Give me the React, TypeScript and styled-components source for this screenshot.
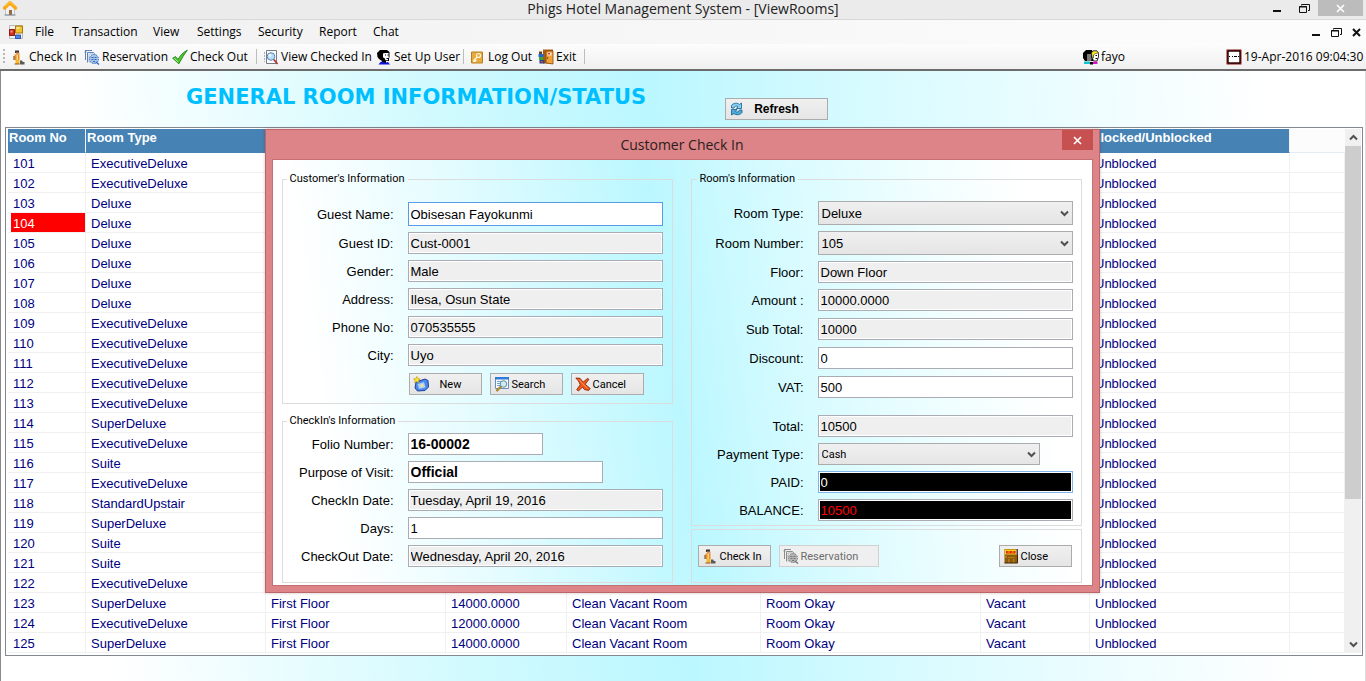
import React from 'react';
import styled, { createGlobalStyle, css } from 'styled-components';

const uiFont = `"Open Sans", "Noto Sans", sans-serif`;
const gridFont = `"Liberation Sans", Arial, sans-serif`;
const smallFont = `Roboto, "Liberation Sans", sans-serif`;

const GlobalStyle = createGlobalStyle`
  *, *::before, *::after { box-sizing: border-box; }
  body { margin: 0; background: #fff; color: #000; font-family: ${gridFont}; font-size: 13px; }
  button, input, select { font: inherit; color: inherit; margin: 0; }
  svg { display: block; flex: none; }
`;

/* ---------- icons ---------- */

type IconProps = { size?: number };

const HomeIcon = ({ size = 16 }: IconProps) => (
  <svg width={size} height={size} viewBox="0 0 16 16">
    <path d="M3.500 8 8 4l4.500 4v7h-9z" fill="#eef1f4" stroke="#b3bac2" strokeWidth=".8" />
    <path d="M7 10h3v5H7z" fill="#9a6a3c" />
    <path d="M2.500 8 8 2.800l5.500 5.200" fill="none" stroke="#fba615" strokeWidth="3.400" strokeLinejoin="round" strokeLinecap="round" />
    <path d="M3 6.500 8 2l4.500 4" fill="none" stroke="#ffcf45" strokeWidth="1" />
    <path d="M2.500 15h11" stroke="#7c8794" strokeWidth="1" />
  </svg>
);

const FormIcon = ({ size = 16 }: IconProps) => (
  <svg width={size} height={size} viewBox="0 0 16 16">
    <path d="M1.500 1.500h13v13h-13z" fill="#f4f4f4" stroke="#b9b9b9" />
    <path d="M1.500 5.500h5v6h-5z" fill="#d6311d" stroke="#8f1a10" />
    <path d="M2.500 6.500h2v2h-2z" fill="#f29a86" />
    <path d="M7.500 2h7v7h-7z" fill="#f5c32c" stroke="#a97a0c" />
    <path d="M8.500 3h3v2h-3z" fill="#fdeb9c" />
    <path d="M7.500 11h5v3.500h-5z" fill="#4b86ea" stroke="#2a55b0" />
  </svg>
);

const PorterIcon = ({ size = 16 }: IconProps) => (
  <svg width={size} height={size} viewBox="0 0 16 16">
    <path d="M4 1.500h4V4H4z" fill="#41322a" />
    <path d="M5 3.500h3.500v2H5z" fill="#d79b62" />
    <path d="M3.500 5.500h5V11h-5z" fill="#ef8a1b" />
    <path d="M5.500 6H7v5H5.500z" fill="#ffd98a" />
    <path d="M4.500 11h4v4h-4z" fill="#f5b92e" />
    <path d="M3.500 14.500h5v1h-5z" fill="#8d5312" />
    <path d="M9 11.500h2l1 1.500h1.500v2.500H9z" fill="#5b5b5b" />
    <path d="M3 7v4" stroke="#6b3b0d" />
  </svg>
);

const ReserveIcon = ({ size = 16, muted }: IconProps & { muted?: boolean }) => {
  const a = muted ? '#8d8d8d' : '#5f7fb5';
  const b = muted ? '#b5b5b5' : '#a9c3e6';
  const c = muted ? '#777' : '#2f6cc0';
  return (
    <svg width={size} height={size} viewBox="0 0 16 16">
      <path d="M1 1.500h7M1.500 1.500V11M.5 3h2M3.500 13.500v-10h6l2 2" fill="none" stroke={a} />
      <path d="M5 5h6l2 2v6H5z" fill="#f3f7fd" stroke={b} />
      <circle cx="10" cy="10" r="4.500" fill={b} stroke={c} strokeDasharray="1.500 1" />
      <path d="M7.500 8.500h2M10.500 8.500h2M7.500 10.500h2M10.500 10.500h2M9 12.500h2" stroke={c} />
      <path d="M12 13l3 2.500" stroke={c} strokeWidth="1.500" />
    </svg>
  );
};

const TickIcon = ({ size = 16 }: IconProps) => (
  <svg width={size} height={size} viewBox="0 0 16 16">
    <path d="M.7 9.200 3.600 7.600l2.300 3C8.300 6.300 11 3.500 15.300 1.200c-3 3.800-5.400 8-8.500 13.600z" fill="#4fcb33" stroke="#1f7d13" strokeWidth=".9" strokeLinejoin="round" />
    <path d="M2.300 9.300 6 13" stroke="#a6f08d" strokeWidth=".9" />
  </svg>
);

const ViewIcon = ({ size = 16 }: IconProps) => (
  <svg width={size} height={size} viewBox="0 0 16 16">
    <path d="M3.500 1.500h10v13h-10z" fill="#fdfdfd" stroke="#767c86" />
    <path d="M1.500 3v10" stroke="#a9aeb5" strokeDasharray="2 1" />
    <circle cx="8" cy="7.500" r="3.800" fill="#b7dcf8" stroke="#5e89b5" />
    <circle cx="7" cy="6.500" r="1.400" fill="#eef8ff" />
    <path d="M10.800 10.500 14.500 15" stroke="#b5352a" strokeWidth="1.800" />
  </svg>
);

const UserIcon = ({ size = 16 }: IconProps) => (
  <svg width={size} height={size} viewBox="0 0 16 16">
    <path d="M1 4 4 1h7l2.500 2v5l-.5 1.500v2.500h-3v2H6v-2L3 10 1.500 8z" fill="#000" />
    <path d="M7 4.500l2-.5h3.500v3.500l.8 1.200H12v2.500H9.500L8.500 9 7 8.500z" fill="#fff" />
    <path d="M9 6h1M11.500 6h1M10.500 9.500H12" stroke="#000" />
    <path d="M2.500 15.500 5 12.500l4 1.200 3-.7 2 2.500z" fill="#1010d8" />
  </svg>
);

const KeyIcon = ({ size = 16 }: IconProps) => (
  <svg width={size} height={size} viewBox="0 0 16 16">
    <path d="M1.500 3h11v11h-11z" fill="#eaa93c" stroke="#b9801f" />
    <circle cx="8.500" cy="6.500" r="2" fill="none" stroke="#fffbe9" strokeWidth="1.200" />
    <path d="M7.200 8 3.800 11.300v1.200h1.400v-1.200h1.400" fill="none" stroke="#fffbe9" strokeWidth="1.100" />
  </svg>
);

const ExitIcon = ({ size = 16 }: IconProps) => (
  <svg width={size} height={size} viewBox="0 0 16 16">
    <path d="M5 .5h10v14H5z" fill="#a85f14" />
    <path d="M8 2h7v13l-7-1z" fill="#f1a236" stroke="#8b4a0c" strokeWidth=".8" />
    <path d="M9.500 3.500h4v3h-4z" fill="#fbe9c6" />
    <path d="M10 4h2v1.500h-2z" fill="#e3324a" />
    <circle cx="9.500" cy="9" r=".8" fill="#6b3609" />
    <path d="M1 2.500h3v2.500H1z" fill="#6a4520" />
    <path d="M.5 5h5v3h-5z" fill="#2368c9" />
    <path d="M1 8h4v3H1z" fill="#3aa53a" />
    <path d="M1.500 11h5v3.500h-5z" fill="#27418f" />
    <path d="M3 12h2v1.500H3z" fill="#e8412a" />
  </svg>
);

const FacesIcon = ({ size = 16 }: IconProps) => (
  <svg width={size} height={size} viewBox="0 0 16 16">
    <path d="M0 4 3 1h6l1 3v8H2L0 9z" fill="#000" />
    <path d="M4 5h4v3l1 1-1 3H4z" fill="#7a7a7a" />
    <path d="M8.500 4 10 2h4l1.500 2.500V8L14 12h-3L9 9z" fill="#fff" stroke="#000" strokeWidth=".8" />
    <path d="M8.500 4 10 2h4l1.500 2-3 .5-2 1.500v3L9 8z" fill="#ffe92e" stroke="#000" strokeWidth=".5" />
    <path d="M12.500 6.500H14M12.500 9.500h2" stroke="#000" />
    <path d="M1 15v-2.500h6V15z" fill="#12c3cf" />
    <path d="M10 15v-2.500h4.500V15z" fill="#d516c8" />
    <path d="M7 13v2.500h3V13z" fill="#000" />
  </svg>
);

const ClockIcon = ({ size = 16 }: IconProps) => (
  <svg width={size} height={size} viewBox="0 0 16 16">
    <path d="M1.500 1.500h13v13h-13z" fill="#fff" stroke="#8e1414" strokeWidth="2" />
    <path d="M2 2h12v12H2z" fill="none" stroke="#000" />
    <path d="M3 7.500h1M6 7.500h1M8 7.500h3M12 7.500h1" stroke="#000" />
  </svg>
);

const RefreshIcon = ({ size = 16 }: IconProps) => (
  <svg width={size} height={size} viewBox="0 0 16 16">
    <path d="M2.500 7V4.500C4 2 8.500 1.500 10.500 3.500L12.500 2v5.500H7.500L9 5.500C7.500 4.500 5.500 5 5 7z" fill="#8bd0f0" stroke="#1e6c9c" strokeWidth=".9" strokeLinejoin="round" />
    <path d="M13 9v2.500C11.500 14 7 14.500 5 12.500L2.500 14V8.500h5.500L6.500 10.500C8 11.500 10 11 10.500 9z" fill="#4fa9da" stroke="#1e6c9c" strokeWidth=".9" strokeLinejoin="round" />
  </svg>
);

const NewIcon = ({ size = 16 }: IconProps) => (
  <svg width={size} height={size} viewBox="0 0 16 16">
    <path d="M3 6 12 3l3 1.500.5 6.500-3.500 3.500-7.500.5L2 12z" fill="#4d86ea" stroke="#1d3f9e" />
    <path d="M4.500 8 11 6l1.500 5.500-6.500 1.500z" fill="#a9d0fb" />
    <circle cx="9" cy="9.500" r="1.500" fill="#ffe27a" />
    <path d="m3.800.5 1 2.200 2.400.2-1.800 1.600.6 2.400-2.200-1.300-2.100 1.300.5-2.400L.5 2.900l2.300-.2z" fill="#ffe92a" stroke="#b98b00" strokeWidth=".6" />
  </svg>
);

const SearchIcon = ({ size = 16 }: IconProps) => (
  <svg width={size} height={size} viewBox="0 0 16 16">
    <path d="M1.500 1.500h13v11h-13z" fill="#f7fbff" stroke="#6c8fb8" />
    <path d="M1 1h14v2.500H1z" fill="#2f7bd8" />
    <path d="M3 5.500h4M3 7.500h3M3 9.500h3" stroke="#6fa6cf" />
    <circle cx="9.500" cy="8" r="3.300" fill="#c9ecf4" stroke="#6a8894" />
    <path d="M7 10.500 2.500 15" stroke="#8a6a1c" strokeWidth="2.200" />
    <path d="M6.500 11 3 14.500" stroke="#e8b83a" strokeWidth="1" />
  </svg>
);

const CancelIcon = ({ size = 16 }: IconProps) => (
  <svg width={size} height={size} viewBox="0 0 16 16">
    <path d="M.8 2 5 2.300 8.200 6 12.500 2.500 14 3.300 10.200 8.300l5 4.200-1.600 2-4.300-1L7.500 11 3.500 15l-1.800-1.300 3.500-5L3.500 5z" fill="#f4571c" stroke="#7a1f08" strokeWidth=".8" strokeLinejoin="round" />
    <path d="M4 3.500 8 8l4.500 4.500" stroke="#ff9a4a" fill="none" />
  </svg>
);

const CloseIcon = ({ size = 16 }: IconProps) => (
  <svg width={size} height={size} viewBox="0 0 16 16">
    <path d="M1.500 1h13v14h-13z" fill="#8d5a0e" />
    <path d="M2 1.500h11.500v5H2z" fill="#f9d21c" />
    <path d="M3 3h9.500v2.500H3z" fill="#dd1f12" />
    <path d="M4.500 4H7M8.500 4H11" stroke="#ffb01c" />
    <path d="M2 8h2v2H2zM5 9h7v1H5zM5 11h1.500v4H5zM10 11h1.500v4H10z" fill="#b97c14" />
    <path d="M14.500 1v6" stroke="#2a3f9e" />
    <path d="M14.500 7v8h-13" fill="none" stroke="#3c2604" />
  </svg>
);

const Chevron = ({ up }: { up?: boolean }) => (
  <svg width="9" height="7" viewBox="0 0 9 7">
    <path d={up ? 'M1 5.500 4.500 2 8 5.500' : 'M1 1.500 4.500 5 8 1.500'} fill="none" stroke="#505050" strokeWidth="2" />
  </svg>
);

const CrossIcon = ({ size = 9, weight = 2 }: { size?: number; weight?: number }) => (
  <svg width={size} height={size} viewBox="0 0 9 9">
    <path d="m1 1 7 7M8 1 1 8" stroke="currentColor" strokeWidth={weight} />
  </svg>
);

const MinimizeIcon = () => (
  <svg width="10" height="10" viewBox="0 0 10 10">
    <path d="M1 8h8" stroke="currentColor" strokeWidth="2" />
  </svg>
);

const RestoreIcon = () => (
  <svg width="11" height="11" viewBox="0 0 11 11">
    <path d="M.5 3.500h7v6h-7zM0 4h8" fill="none" stroke="currentColor" />
    <path d="M2.500 2.500v-1h8v6H9" fill="none" stroke="currentColor" />
  </svg>
);

/* ---------- window chrome ---------- */

const Window = styled.div`
  position: relative;
  min-height: 100vh;
  display: flex;
  flex-direction: column;
`;

const TitleBar = styled.header`
  display: grid;
  grid-template-columns: 1fr auto 1fr;
  height: 20px;
  background: #ebebeb;
  border-bottom: 1px solid #d8d8d8;
  font-family: ${uiFont};
`;

const AppMark = styled.div`
  padding-left: 2px;
`;

const AppTitle = styled.h1`
  margin: 0;
  font-size: 14px;
  line-height: 18px;
  font-weight: 400;
  color: #222;
`;

const WindowButtons = styled.div`
  display: flex;
  justify-content: flex-end;
  padding-right: 3px;
`;

const ChromeButton = styled.button<{ $w: number; $closing?: boolean }>`
  display: flex;
  align-items: center;
  justify-content: center;
  width: ${(p) => p.$w}px;
  height: 16px;
  padding: 0;
  border: 0;
  background: ${(p) => (p.$closing ? '#bcbcbc' : 'transparent')};
  color: ${(p) => (p.$closing ? '#fff' : '#111')};
`;

const MenuBar = styled.nav`
  display: flex;
  align-items: center;
  height: 24px;
  padding-left: 8px;
  background: linear-gradient(90deg, #f0f0f0, #fcfcfc 90%);
  font-family: ${uiFont};
  font-size: 12px;
  line-height: 16px;
`;

const MenuButton = styled.button<{ $w: number }>`
  width: ${(p) => p.$w}px;
  padding: 0;
  border: 0;
  background: none;
  text-align: left;
  white-space: nowrap;
`;

const MenuIcon = styled.span`
  width: 27px;
`;

const Spring = styled.span`
  flex: 1;
`;

const Toolbar = styled.div`
  display: flex;
  align-items: center;
  height: 27px;
  padding: 0 4px 0 3px;
  background: linear-gradient(#fdfdfd, #f0f0f0);
  border-bottom: 2px solid #6c6c6c;
  font-family: ${uiFont};
  font-size: 12px;
  line-height: 16px;
`;

const Grip = styled.span`
  width: 2px;
  height: 16px;
  margin-right: 6px;
  background: repeating-linear-gradient(#b9b9b9 0 2px, transparent 2px 4px);
`;

const ToolButton = styled.button<{ $w: number }>`
  display: flex;
  align-items: center;
  gap: 2px;
  width: ${(p) => p.$w}px;
  padding: 0;
  border: 0;
  background: none;
  white-space: nowrap;
`;

const ToolDivider = styled.span`
  width: 1px;
  height: 15px;
  margin-right: 6px;
  background: #bdbdbd;
`;

const ToolStatus = styled.span<{ $w: number }>`
  display: flex;
  align-items: center;
  gap: 2px;
  width: ${(p) => p.$w}px;
  white-space: nowrap;
`;

/* ---------- rooms view ---------- */

const RoomsView = styled.main`
  flex: 1;
  padding: 0 2px 25px 4px;
  border-left: 1px solid #8a8a8a;
  border-right: 1px solid #dcdcdc;
  background: linear-gradient(86deg, #fff 8%, #d0fafe 34%, #bbf7ff 49%, #d8fbff 65%, #eefdff 80%, #fff 93%);
`;

const ViewHeader = styled.div`
  display: flex;
  height: 56px;
  padding-left: 181px;
`;

const ViewTitle = styled.h2`
  width: 539px;
  margin: 0;
  padding-top: 12px;
  font-family: "DejaVu Sans", Verdana, sans-serif;
  font-size: 21px;
  line-height: 28px;
  font-weight: 700;
  color: #00bfff;
  white-space: nowrap;
`;

const PushButton = styled.button<{ $w: number }>`
  display: flex;
  align-items: center;
  width: ${(p) => p.$w}px;
  height: 22px;
  padding: 0 4px 0 3px;
  border: 1px solid #acacac;
  background: linear-gradient(#f0f0f0, #e5e5e5);
  font-family: ${smallFont};
  font-size: 11px;
  white-space: nowrap;
  &:disabled {
    color: #6d6d6d;
    border-color: #d0d0d0;
    background: #efefef;
  }
`;

const ButtonText = styled.span<{ $centered?: boolean }>`
  padding-left: 2px;
  ${(p) =>
    p.$centered &&
    css`
      flex: 1;
      text-align: center;
      padding-left: 0;
      padding-right: 4px;
    `}
`;

const RefreshButton = styled(PushButton)`
  margin-top: 27px;
  padding-right: 15px;
  font-family: ${gridFont};
  font-size: 12px;
  font-weight: 700;
`;

const GridPanel = styled.div`
  display: flex;
  padding: 1px 1px 2px 2px;
  border: 1px solid #828790;
  background: #fff;
`;

const RoomTable = styled.table`
  flex: 1;
  min-width: 0;
  table-layout: fixed;
  border-spacing: 0;
  color: #000080;
`;

const HeadCell = styled.th<{ $blank?: boolean }>`
  height: 24px;
  padding: 2px 1px;
  line-height: 14px;
  text-align: left;
  vertical-align: top;
  white-space: nowrap;
  color: #fff;
  background: ${(p) => (p.$blank ? '#fcfcfc' : '#4682b4')};
  border-bottom: 1px solid ${(p) => (p.$blank ? '#e3ebf7' : '#4682b4')};
  border-right: 1px solid ${(p) => (p.$blank ? '#fcfcfc' : '#f0f4f8')};
`;

const Cell = styled.td`
  height: 20px;
  padding: 0 0 0 3px;
  white-space: nowrap;
  border-right: 1px solid #f0f0f0;
  border-bottom: 1px solid #f0f0f0;
`;

const CellText = styled.span<{ $occupied?: boolean }>`
  display: block;
  height: 19px;
  padding-left: 2px;
  line-height: 21px;
  ${(p) =>
    p.$occupied &&
    css`
      background: #f00;
      color: #fff;
    `}
`;

const ScrollBar = styled.div`
  display: flex;
  flex-direction: column;
  width: 16px;
  background: #f0f0f0;
`;

const ScrollArrow = styled.button`
  display: flex;
  align-items: center;
  justify-content: center;
  height: 17px;
  padding: 0;
  border: 0;
  background: #f0f0f0;
`;

const ScrollTrack = styled.div`
  flex: 1;
`;

const ScrollThumb = styled.div`
  height: 72%;
  background: #cdcdcd;
`;

/* ---------- check-in dialog ---------- */

const DialogLayer = styled.div`
  position: absolute;
  inset: 0;
  display: flex;
  justify-content: center;
  align-items: flex-start;
  padding-top: 129px;
  padding-right: 2px;
`;

const Dialog = styled.section`
  padding: 0 6px 6px;
  border: 1px solid #b9656a;
  background: #dc8487;
  box-shadow: 0 0 3px rgba(80, 0, 0, 0.25);
`;

const DialogBar = styled.div`
  display: grid;
  grid-template-columns: 1fr auto 1fr;
  height: 29px;
  font-family: ${uiFont};
`;

const DialogTitle = styled.h2`
  grid-column: 2;
  margin: 0;
  font-size: 14px;
  line-height: 29px;
  font-weight: 400;
  color: #2b1d1d;
`;

const DialogClose = styled.button`
  display: flex;
  align-items: center;
  justify-content: center;
  justify-self: end;
  width: 31px;
  height: 20px;
  padding: 0;
  border: 0;
  background: #c75050;
  color: #fff;
`;

const DialogBody = styled.form`
  display: flex;
  gap: 18px;
  padding: 12px 10px 2px 9px;
  border: 1px solid #c46f73;
  background: linear-gradient(82deg, #fff 8%, #e4fcff 26%, #bbf7ff 49%, #d6fbff 63%, #f0feff 80%, #fff 92%);
`;

const Column = styled.div`
  display: flex;
  flex-direction: column;
  width: 391px;
`;

const Group = styled.fieldset`
  margin: 0;
  padding: 0 0 0 12px;
  border: 1px solid #dcdcdc;
  min-width: 0;
`;

const GroupTitle = styled.legend`
  margin-left: -8px;
  padding: 0 3px;
  font-family: ${smallFont};
  font-size: 11px;
  line-height: 14px;
`;

const CustomerGroup = styled(Group)`
  padding-top: 16px;
  padding-bottom: 8px;
`;

const StayGroup = styled(Group)`
  flex: 1;
  margin-top: 10px;
  padding-top: 5px;
  padding-bottom: 15px;
`;

const RoomGroup = styled(Group)`
  padding-top: 15px;
  padding-bottom: 4px;
  padding-left: 13px;
`;

const ActionGroup = styled(Group)`
  display: flex;
  flex: 1;
  align-items: center;
  margin-top: 3px;
  padding: 0 9px 0 6px;
  gap: 8px;
`;

const FieldStack = styled.div<{ $gap?: number; $top?: number }>`
  display: flex;
  flex-direction: column;
  gap: ${(p) => p.$gap ?? 6}px;
  margin-top: ${(p) => p.$top ?? 0}px;
`;

const FieldRow = styled.div`
  display: flex;
  align-items: center;
`;

const FieldLabel = styled.label`
  width: 113px;
  padding-right: 14px;
  text-align: right;
  white-space: nowrap;
`;

type Tone = 'plain' | 'locked' | 'active' | 'paid' | 'balance';

const tones = {
  plain: css`
    background: #fff;
    border-color: #ababb3;
  `,
  locked: css`
    background: #efefef;
    border-color: #ababb3;
  `,
  active: css`
    background: #fff;
    border-color: #569de5;
  `,
  paid: css`
    background: #000;
    color: #fff;
    border-color: #7eb4ea;
  `,
  balance: css`
    background: #000;
    color: #f00;
    border-color: #ababb3;
  `,
};

const TextBox = styled.input<{ $tone: Tone; $w: number; $tall?: boolean; $bold?: boolean }>`
  width: ${(p) => p.$w}px;
  height: ${(p) => (p.$tall ? 24 : 22)}px;
  padding: 0 2px;
  border: 1px solid;
  border-radius: 0;
  outline: 0;
  box-shadow: inset 0 0 0 1px #fff;
  font-size: ${(p) => (p.$bold ? 14 : 13)}px;
  font-weight: ${(p) => (p.$bold ? 700 : 400)};
  ${(p) => tones[p.$tone]}
`;

const SelectWrap = styled.div<{ $w: number }>`
  position: relative;
  width: ${(p) => p.$w}px;

  svg {
    position: absolute;
    right: 4px;
    top: 50%;
    margin-top: -3px;
    pointer-events: none;
  }
`;

const SelectBox = styled.select<{ $compact?: boolean }>`
  display: block;
  appearance: none;
  width: 100%;
  height: ${(p) => (p.$compact ? 22 : 24)}px;
  padding: 0 20px 0 3px;
  border: 1px solid #acacac;
  border-radius: 0;
  background: linear-gradient(#f0f0f0, #e5e5e5);
  font-family: ${(p) => (p.$compact ? smallFont : gridFont)};
  font-size: ${(p) => (p.$compact ? 11 : 13)}px;
`;

const ButtonRow = styled.div`
  display: flex;
  gap: 8px;
  padding: 7px 0 0 114px;
`;

/* ---------- data ---------- */

type Room = [string, string, string?, string?, string?, string?, string?];

const rooms: Room[] = [
  ['101', 'ExecutiveDeluxe'],
  ['102', 'ExecutiveDeluxe'],
  ['103', 'Deluxe'],
  ['104', 'Deluxe'],
  ['105', 'Deluxe'],
  ['106', 'Deluxe'],
  ['107', 'Deluxe'],
  ['108', 'Deluxe'],
  ['109', 'ExecutiveDeluxe'],
  ['110', 'ExecutiveDeluxe'],
  ['111', 'ExecutiveDeluxe'],
  ['112', 'ExecutiveDeluxe'],
  ['113', 'ExecutiveDeluxe'],
  ['114', 'SuperDeluxe'],
  ['115', 'ExecutiveDeluxe'],
  ['116', 'Suite'],
  ['117', 'ExecutiveDeluxe'],
  ['118', 'StandardUpstair'],
  ['119', 'SuperDeluxe'],
  ['120', 'Suite'],
  ['121', 'Suite'],
  ['122', 'ExecutiveDeluxe'],
  ['123', 'SuperDeluxe', 'First Floor', '14000.0000', 'Clean Vacant Room', 'Room Okay', 'Vacant'],
  ['124', 'ExecutiveDeluxe', 'First Floor', '12000.0000', 'Clean Vacant Room', 'Room Okay', 'Vacant'],
  ['125', 'SuperDeluxe', 'First Floor', '14000.0000', 'Clean Vacant Room', 'Room Okay', 'Vacant'],
];

const columnWidths = [78, 180, 180, 121, 194, 220, 109, 200];
const headings = ['Room No', 'Room Type', '', '', '', '', '', 'Blocked/Unblocked'];

const menus: [string, number][] = [
  ['File', 37],
  ['Transaction', 81],
  ['View', 44],
  ['Settings', 61],
  ['Security', 61],
  ['Report', 54],
  ['Chat', 40],
];

/* ---------- parts ---------- */

type FieldProps = {
  id: string;
  label: string;
  value: string;
  tone?: Tone;
  width?: number;
  tall?: boolean;
  bold?: boolean;
};

const Field = ({ id, label, value, tone = 'locked', width = 255, tall, bold }: FieldProps) => (
  <FieldRow>
    <FieldLabel htmlFor={id}>{label}</FieldLabel>
    <TextBox
      id={id}
      type="text"
      defaultValue={value}
      readOnly={tone === 'locked' || tone === 'balance'}
      $tone={tone}
      $w={width}
      $tall={tall}
      $bold={bold}
    />
  </FieldRow>
);

type ChoiceProps = { id: string; label: string; value: string; width?: number; compact?: boolean };

const Choice = ({ id, label, value, width = 255, compact }: ChoiceProps) => (
  <FieldRow>
    <FieldLabel htmlFor={id}>{label}</FieldLabel>
    <SelectWrap $w={width}>
      <SelectBox id={id} defaultValue={value} $compact={compact}>
        <option>{value}</option>
      </SelectBox>
      <Chevron />
    </SelectWrap>
  </FieldRow>
);

const CheckInDialog = () => (
  <DialogLayer>
    <Dialog role="dialog" aria-labelledby="dialog-title">
      <DialogBar>
        <DialogTitle id="dialog-title">Customer Check In</DialogTitle>
        <DialogClose type="button" aria-label="Close dialog">
          <CrossIcon size={9} weight={1.6} />
        </DialogClose>
      </DialogBar>
      <DialogBody onSubmit={(e) => e.preventDefault()}>
        <Column>
          <CustomerGroup>
            <GroupTitle>Customer's Information</GroupTitle>
            <FieldStack>
              <Field id="guest-name" label="Guest Name:" value="Obisesan Fayokunmi" tone="active" tall />
              <Field id="guest-id" label="Guest ID:" value="Cust-0001" />
              <Field id="gender" label="Gender:" value="Male" />
              <Field id="address" label="Address:" value="Ilesa, Osun State" />
              <Field id="phone" label="Phone No:" value="070535555" />
              <Field id="city" label="City:" value="Uyo" />
            </FieldStack>
            <ButtonRow>
              <PushButton type="button" $w={73}>
                <NewIcon />
                <ButtonText $centered>New</ButtonText>
              </PushButton>
              <PushButton type="button" $w={73}>
                <SearchIcon />
                <ButtonText>Search</ButtonText>
              </PushButton>
              <PushButton type="button" $w={73}>
                <CancelIcon />
                <ButtonText>Cancel</ButtonText>
              </PushButton>
            </ButtonRow>
          </CustomerGroup>
          <StayGroup>
            <GroupTitle>CheckIn's Information</GroupTitle>
            <FieldStack>
              <Field id="folio" label="Folio Number:" value="16-00002" tone="plain" width={135} bold />
              <Field id="purpose" label="Purpose of Visit:" value="Official" tone="plain" width={195} bold />
              <Field id="checkin-date" label="CheckIn Date:" value="Tuesday, April 19, 2016" />
              <Field id="days" label="Days:" value="1" tone="plain" />
              <Field id="checkout-date" label="CheckOut Date:" value="Wednesday, April 20, 2016" />
            </FieldStack>
          </StayGroup>
        </Column>
        <Column>
          <RoomGroup>
            <GroupTitle>Room's Information</GroupTitle>
            <FieldStack>
              <Choice id="room-type" label="Room Type:" value="Deluxe" />
              <Choice id="room-number" label="Room Number:" value="105" />
              <Field id="floor" label="Floor:" value="Down Floor" />
              <Field id="amount" label="Amount :" value="10000.0000" />
            </FieldStack>
            <FieldStack $gap={7} $top={7}>
              <Field id="sub-total" label="Sub Total:" value="10000" />
              <Field id="discount" label="Discount:" value="0" tone="plain" />
              <Field id="vat" label="VAT:" value="500" tone="plain" />
            </FieldStack>
            <FieldStack $top={17}>
              <Field id="total" label="Total:" value="10500" />
              <Choice id="payment" label="Payment Type:" value="Cash" width={222} compact />
              <Field id="paid" label="PAID:" value="0" tone="paid" />
              <Field id="balance" label="BALANCE:" value="10500" tone="balance" />
            </FieldStack>
          </RoomGroup>
          <ActionGroup as="div">
            <PushButton type="submit" $w={73}>
              <PorterIcon />
              <ButtonText>Check In</ButtonText>
            </PushButton>
            <PushButton type="button" $w={100} disabled>
              <ReserveIcon muted />
              <ButtonText>Reservation</ButtonText>
            </PushButton>
            <Spring />
            <PushButton type="button" $w={73}>
              <CloseIcon />
              <ButtonText>Close</ButtonText>
            </PushButton>
          </ActionGroup>
        </Column>
      </DialogBody>
    </Dialog>
  </DialogLayer>
);

export default function App() {
  return (
    <>
      <GlobalStyle />
      <Window>
        <TitleBar>
          <AppMark>
            <HomeIcon />
          </AppMark>
          <AppTitle>Phigs Hotel Management System - [ViewRooms]</AppTitle>
          <WindowButtons>
            <ChromeButton $w={26} aria-label="Minimize">
              <MinimizeIcon />
            </ChromeButton>
            <ChromeButton $w={28} aria-label="Restore">
              <RestoreIcon />
            </ChromeButton>
            <ChromeButton $w={45} $closing aria-label="Close">
              <CrossIcon size={9} weight={1.6} />
            </ChromeButton>
          </WindowButtons>
        </TitleBar>

        <MenuBar>
          <MenuIcon>
            <FormIcon />
          </MenuIcon>
          {menus.map(([name, w]) => (
            <MenuButton key={name} $w={w}>
              {name}
            </MenuButton>
          ))}
          <Spring />
          <ChromeButton $w={20} aria-label="Minimize view">
            <MinimizeIcon />
          </ChromeButton>
          <ChromeButton $w={20} aria-label="Restore view">
            <RestoreIcon />
          </ChromeButton>
          <ChromeButton $w={20} aria-label="Close view">
            <CrossIcon />
          </ChromeButton>
        </MenuBar>

        <Toolbar>
          <Grip />
          <ToolButton $w={73}>
            <PorterIcon />
            Check In
          </ToolButton>
          <ToolButton $w={88}>
            <ReserveIcon />
            Reservation
          </ToolButton>
          <ToolButton $w={84}>
            <TickIcon />
            Check Out
          </ToolButton>
          <ToolDivider />
          <ToolButton $w={113}>
            <ViewIcon />
            View Checked In
          </ToolButton>
          <ToolButton $w={87}>
            <UserIcon />
            Set Up User
          </ToolButton>
          <ToolDivider />
          <ToolButton $w={68}>
            <KeyIcon />
            Log Out
          </ToolButton>
          <ToolButton $w={46}>
            <ExitIcon />
            Exit
          </ToolButton>
          <ToolDivider />
          <Spring />
          <ToolStatus $w={143}>
            <FacesIcon />
            fayo
          </ToolStatus>
          <ToolStatus $w={136}>
            <ClockIcon />
            19-Apr-2016 09:04:30
          </ToolStatus>
        </Toolbar>

        <RoomsView>
          <ViewHeader>
            <ViewTitle>GENERAL ROOM INFORMATION/STATUS</ViewTitle>
            <RefreshButton type="button" $w={103}>
              <RefreshIcon />
              <ButtonText $centered>Refresh</ButtonText>
            </RefreshButton>
          </ViewHeader>
          <GridPanel>
            <RoomTable>
              <colgroup>
                {columnWidths.map((w, i) => (
                  <col key={i} width={w} />
                ))}
                <col />
              </colgroup>
              <thead>
                <tr>
                  {headings.map((h, i) => (
                    <HeadCell key={i}>{h}</HeadCell>
                  ))}
                  <HeadCell $blank />
                </tr>
              </thead>
              <tbody>
                {rooms.map((room) => (
                  <tr key={room[0]}>
                    {[0, 1, 2, 3, 4, 5, 6].map((i) => (
                      <Cell key={i}>
                        <CellText $occupied={i === 0 && room[0] === '104'}>{room[i]}</CellText>
                      </Cell>
                    ))}
                    <Cell>
                      <CellText>Unblocked</CellText>
                    </Cell>
                    <Cell />
                  </tr>
                ))}
              </tbody>
            </RoomTable>
            <ScrollBar>
              <ScrollArrow aria-label="Scroll up">
                <Chevron up />
              </ScrollArrow>
              <ScrollTrack>
                <ScrollThumb />
              </ScrollTrack>
              <ScrollArrow aria-label="Scroll down">
                <Chevron />
              </ScrollArrow>
            </ScrollBar>
          </GridPanel>
        </RoomsView>

        <CheckInDialog />
      </Window>
    </>
  );
}
